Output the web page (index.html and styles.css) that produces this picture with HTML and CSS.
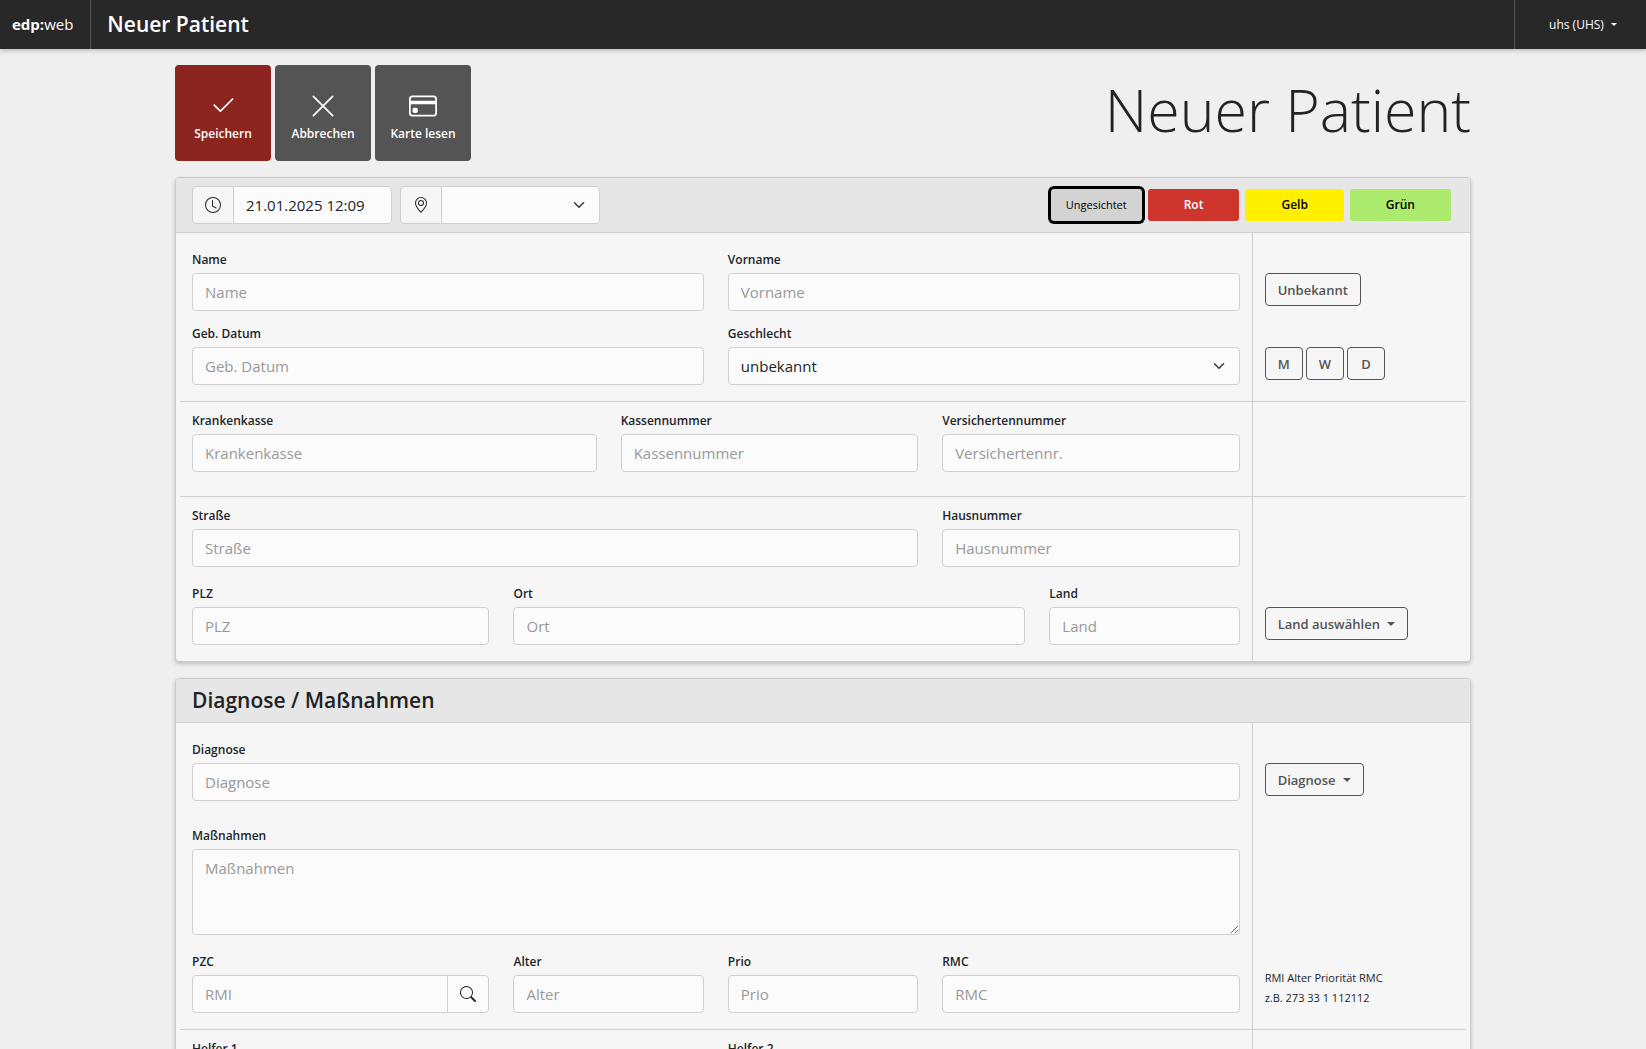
FILE: index.html
```html
<!DOCTYPE html>
<html lang="de">
<head>
<meta charset="UTF-8">
<meta name="viewport" content="width=device-width, initial-scale=1.0">
<title>Neuer Patient</title>
<link rel="stylesheet" href="styles.css">
</head>
<body>
  <nav class="navbar">
    <a class="brand" href="#"><b>edp:</b>web</a>
    <span class="navbar-title">Neuer Patient</span>
    <button type="button" class="user-menu">uhs (UHS) <span class="caret"></span></button>
  </nav>

  <form class="container">
    <div class="page-head">
      <div class="tiles">
        <button type="button" class="tile save">
          <svg width="28" height="28" viewBox="0 0 16 16" fill="currentColor"><path d="M13.854 3.646a.5.5 0 0 1 0 .708l-7 7a.5.5 0 0 1-.708 0l-3.5-3.5a.5.5 0 1 1 .708-.708L6.5 10.293l6.646-6.647a.5.5 0 0 1 .708 0"/></svg>
          Speichern
        </button>
        <button type="button" class="tile">
          <svg width="28" height="28" viewBox="0 0 16 16" fill="none" stroke="currentColor" stroke-linecap="round"><path d="M2.5 2.5l11 11M13.5 2.5l-11 11"/></svg>
          Abbrechen
        </button>
        <button type="button" class="tile">
          <svg width="28" height="28" viewBox="0 0 16 16" fill="currentColor"><path d="M0 4a2 2 0 0 1 2-2h12a2 2 0 0 1 2 2v8a2 2 0 0 1-2 2H2a2 2 0 0 1-2-2zm2-1a1 1 0 0 0-1 1v1h14V4a1 1 0 0 0-1-1zm13 4H1v5a1 1 0 0 0 1 1h12a1 1 0 0 0 1-1z"/><path d="M2 10a1 1 0 0 1 1-1h1a1 1 0 0 1 1 1v1a1 1 0 0 1-1 1H3a1 1 0 0 1-1-1z"/></svg>
          Karte lesen
        </button>
      </div>
      <h1>Neuer Patient</h1>
    </div>

    <section class="card">
      <div class="card-header">
        <div class="input-group">
          <label class="addon" for="zeit" aria-label="Zeit">
            <svg width="16" height="16" viewBox="0 0 16 16" fill="currentColor"><path d="M8 3.5a.5.5 0 0 0-1 0V9a.5.5 0 0 0 .252.434l3.5 2a.5.5 0 0 0 .496-.868L8 8.71z"/><path d="M8 16A8 8 0 1 0 8 0a8 8 0 0 0 0 16m7-8A7 7 0 1 1 1 8a7 7 0 0 1 14 0"/></svg>
          </label>
          <input class="control" type="text" id="zeit" value="21.01.2025 12:09">
        </div>
        <div class="input-group">
          <label class="addon" for="standort" aria-label="Standort">
            <svg width="16" height="16" viewBox="0 0 16 16" fill="currentColor"><path d="M12.166 8.94c-.524 1.062-1.234 2.12-1.96 3.07A32 32 0 0 1 8 14.58a32 32 0 0 1-2.206-2.57c-.726-.95-1.436-2.008-1.96-3.07C3.304 7.867 3 6.862 3 6a5 5 0 0 1 10 0c0 .862-.305 1.867-.834 2.94M8 16s6-5.686 6-10A6 6 0 0 0 2 6c0 4.314 6 10 6 10"/><path d="M8 8a2 2 0 1 1 0-4 2 2 0 0 1 0 4m0 1a3 3 0 1 0 0-6 3 3 0 0 0 0 6"/></svg>
          </label>
          <select class="control select" id="standort"><option></option></select>
        </div>
        <div class="triage">
          <button type="button" class="none active">Ungesichtet</button>
          <button type="button" class="red">Rot</button>
          <button type="button" class="yellow">Gelb</button>
          <button type="button" class="green">Grün</button>
        </div>
      </div>

      <div class="block first">
        <div class="form-row">
          <div class="fields">
            <div class="field w5"><label for="name">Name</label><input class="control" type="text" id="name" placeholder="Name"></div>
            <div class="field w5"><label for="vorname">Vorname</label><input class="control" type="text" id="vorname" placeholder="Vorname"></div>
          </div>
          <div class="side"><button type="button" class="btn">Unbekannt</button></div>
        </div>
        <div class="form-row">
          <div class="fields">
            <div class="field w5"><label for="geb">Geb. Datum</label><input class="control" type="text" id="geb" placeholder="Geb. Datum"></div>
            <div class="field w5"><label for="geschlecht">Geschlecht</label><select class="control select" id="geschlecht"><option>unbekannt</option></select></div>
          </div>
          <div class="side">
            <button type="button" class="btn">M</button>
            <button type="button" class="btn">W</button>
            <button type="button" class="btn">D</button>
          </div>
        </div>
      </div>

      <div class="block insurance">
        <div class="form-row">
          <div class="fields">
            <div class="field w4"><label for="kasse">Krankenkasse</label><input class="control" type="text" id="kasse" placeholder="Krankenkasse"></div>
            <div class="field w3"><label for="kassennr">Kassennummer</label><input class="control" type="text" id="kassennr" placeholder="Kassennummer"></div>
            <div class="field w3"><label for="versnr">Versichertennummer</label><input class="control" type="text" id="versnr" placeholder="Versichertennr."></div>
          </div>
          <div class="side"></div>
        </div>
      </div>

      <div class="block address">
        <div class="form-row">
          <div class="fields">
            <div class="field w7"><label for="strasse">Straße</label><input class="control" type="text" id="strasse" placeholder="Straße"></div>
            <div class="field w3"><label for="hausnr">Hausnummer</label><input class="control" type="text" id="hausnr" placeholder="Hausnummer"></div>
          </div>
          <div class="side"></div>
        </div>
        <div class="form-row">
          <div class="fields">
            <div class="field w3"><label for="plz">PLZ</label><input class="control" type="text" id="plz" placeholder="PLZ"></div>
            <div class="field w5"><label for="ort">Ort</label><input class="control" type="text" id="ort" placeholder="Ort"></div>
            <div class="field w2"><label for="land">Land</label><input class="control" type="text" id="land" placeholder="Land"></div>
          </div>
          <div class="side"><button type="button" class="btn">Land auswählen <span class="caret"></span></button></div>
        </div>
      </div>
    </section>

    <section class="card">
      <div class="card-header heading"><h2>Diagnose / Maßnahmen</h2></div>

      <div class="block first diagnosis">
        <div class="form-row">
          <div class="fields">
            <div class="field w10"><label for="diagnose">Diagnose</label><input class="control" type="text" id="diagnose" placeholder="Diagnose"></div>
          </div>
          <div class="side"><button type="button" class="btn">Diagnose <span class="caret"></span></button></div>
        </div>
        <div class="form-row">
          <div class="fields">
            <div class="field w10"><label for="massnahmen">Maßnahmen</label><textarea class="control" id="massnahmen" rows="3" placeholder="Maßnahmen"></textarea></div>
          </div>
          <div class="side"></div>
        </div>
        <div class="form-row">
          <div class="fields">
            <div class="field w3">
              <label for="pzc">PZC</label>
              <div class="input-group">
                <input class="control" type="text" id="pzc" placeholder="RMI">
                <button type="button" class="search" aria-label="Suchen">
                  <svg width="16" height="16" viewBox="0 0 16 16" fill="currentColor"><path d="M11.742 10.344a6.5 6.5 0 1 0-1.397 1.398h-.001q.044.06.098.115l3.85 3.85a1 1 0 0 0 1.415-1.414l-3.85-3.85a1 1 0 0 0-.115-.1zM12 6.5a5.5 5.5 0 1 1-11 0 5.5 5.5 0 0 1 11 0"/></svg>
                </button>
              </div>
            </div>
            <div class="field w2"><label for="alter">Alter</label><input class="control" type="text" id="alter" placeholder="Alter"></div>
            <div class="field w2"><label for="prio">Prio</label><input class="control" type="text" id="prio" placeholder="Prio"></div>
            <div class="field w3"><label for="rmc">RMC</label><input class="control" type="text" id="rmc" placeholder="RMC"></div>
          </div>
          <div class="side hint">RMI Alter Priorität RMC<br>z.B. 273 33 1 112112</div>
        </div>
      </div>

      <div class="block">
        <div class="form-row">
          <div class="fields">
            <div class="field w5"><label for="helfer1">Helfer 1</label><input class="control" type="text" id="helfer1" placeholder="Helfer 1"></div>
            <div class="field w5"><label for="helfer2">Helfer 2</label><input class="control" type="text" id="helfer2" placeholder="Helfer 2"></div>
          </div>
          <div class="side"></div>
        </div>
      </div>
    </section>
  </form>
</body>
</html>
```

FILE: styles.css
```css
* {
  box-sizing: border-box;
}

body {
  margin: 0;
  font-family: "Open Sans", "Noto Sans", sans-serif;
  font-size: 15px;
  line-height: 24px;
  color: #212529;
  background-color: #efefef;
}

button, input, select, textarea {
  font: inherit;
  color: inherit;
  margin: 0;
}

button {
  cursor: pointer;
}

h1, h2 {
  margin: 0;
  color: #222;
}

/* top bar */
.navbar {
  display: flex;
  height: 49px;
  background-color: #282828;
  color: #fff;
  box-shadow: 0 2px 4px rgba(0, 0, 0, 0.2);
}

.brand {
  display: flex;
  align-items: center;
  padding: 0 17px 1px 12px;
  border-right: 1px solid #545454;
  color: #fff;
  text-decoration: none;
}

.navbar-title {
  display: flex;
  align-items: center;
  padding: 0 0 1px 16px;
  font-size: 21px;
  font-weight: 600;
}

.user-menu {
  margin-left: auto;
  padding: 0 29px 0 34px;
  border: 0;
  border-left: 1px solid #545454;
  background: none;
  font-size: 12px;
}

.caret {
  display: inline-block;
  margin-left: 4px;
  vertical-align: 3px;
  border-top: 4px solid;
  border-left: 4px solid transparent;
  border-right: 4px solid transparent;
}

.user-menu .caret {
  border-width: 3px 3px 0;
}

.container {
  max-width: 1320px;
  margin: 0 auto;
  padding: 16px 12px;
}

.page-head {
  display: flex;
  justify-content: space-between;
  margin-bottom: 16px;
}

.page-head h1 {
  font-size: 59px;
  font-weight: 300;
  line-height: 88px;
}

.tiles {
  display: flex;
  gap: 4px;
}

.tile {
  display: flex;
  flex-direction: column;
  align-items: center;
  width: 96px;
  height: 96px;
  padding: 27px 0 0;
  border: 0;
  border-radius: 4px;
  background-color: #545454;
  color: #fff;
  font-size: 12px;
  font-weight: 600;
  line-height: 28px;
}

.tile.save {
  background-color: #8c251f;
}

/* cards */
.card {
  margin-bottom: 16px;
  border: 1px solid #ccc;
  border-radius: 4px;
  background-color: #f6f6f6;
  box-shadow: 0 2px 4px rgba(0, 0, 0, 0.2);
}

.card-header {
  display: flex;
  align-items: center;
  gap: 8px;
  padding: 8px 16px;
  border-bottom: 1px solid #d0d0d0;
  border-radius: 3px 3px 0 0;
  background-color: #e6e6e6;
}

.card-header .input-group {
  width: 200px;
}

.card-header.heading {
  padding: 6px 16px;
}

.card-header h2 {
  font-size: 21px;
  font-weight: 600;
  line-height: 31px;
}

.triage {
  display: flex;
  gap: 6px;
  margin-left: auto;
  padding-right: 3px;
}

.triage button {
  height: 32px;
  padding: 0 36px;
  border: 0;
  border-radius: 3px;
  color: #000;
  font-size: 12px;
  font-weight: 600;
}

.triage .none {
  padding: 0 15px;
  background-color: #d3d3d3;
  font-size: 11px;
  font-weight: 400;
}

.triage .active {
  box-shadow: 0 0 0 3px #000;
}

.triage .red {
  background-color: #ce352c;
  color: #fff;
}

.triage .yellow {
  background-color: #fff000;
}

.triage .green {
  background-color: #adeb6e;
}

/* form */
.block {
  margin: 0 4px;
}

.block + .block {
  border-top: 1px solid #d0d0d0;
}

.form-row {
  display: grid;
  grid-template-columns: minmax(0, 10fr) minmax(0, 2fr);
}

.fields {
  display: grid;
  grid-template-columns: repeat(10, minmax(0, 1fr));
  column-gap: 24px;
  padding: 8px 12px 0;
}

.side {
  padding: 32px 0 0 12px;
  border-left: 1px solid #d0d0d0;
  display: flex;
  align-items: flex-start;
  gap: 3px;
}

.first .fields {
  padding-top: 16px;
}

.first .side {
  padding-top: 40px;
}

.first .form-row + .form-row .fields {
  padding-top: 12px;
}

.first .form-row + .form-row .side {
  padding-top: 36px;
}

.address .form-row + .form-row .fields {
  padding-top: 16px;
}

.address .form-row + .form-row .side {
  padding-top: 40px;
}

.diagnosis .form-row:nth-child(2) .fields {
  padding-top: 24px;
}

.diagnosis .form-row:nth-child(3) .fields {
  padding-top: 16px;
}

.form-row:last-child .fields {
  padding-bottom: 16px;
}

.insurance .form-row .fields {
  padding-bottom: 24px;
}

.w2 { grid-column: span 2; }
.w3 { grid-column: span 3; }
.w4 { grid-column: span 4; }
.w5 { grid-column: span 5; }
.w7 { grid-column: span 7; }
.w10 { grid-column: span 10; }

.field > label {
  display: block;
  margin-bottom: 3px;
  font-size: 12px;
  font-weight: 600;
  line-height: 21px;
}

.control {
  display: block;
  width: 100%;
  height: 38px;
  padding: 6px 12px;
  border: 1px solid #d0d0d0;
  border-radius: 4px;
  background-color: #fbfbfb;
}

.control::placeholder {
  color: #999;
  opacity: 1;
}

textarea.control {
  height: 86px;
  resize: vertical;
}

.select {
  appearance: none;
  background-image: url("data:image/svg+xml,%3Csvg xmlns='http://www.w3.org/2000/svg' viewBox='0 0 16 16'%3E%3Cpath fill='none' stroke='%23343a40' stroke-linecap='round' stroke-linejoin='round' stroke-width='2' d='m2 5 6 6 6-6'/%3E%3C/svg%3E");
  background-repeat: no-repeat;
  background-position: right 14px center;
  background-size: 12px 12px;
}

.input-group {
  display: flex;
}

.addon, .search {
  flex: none;
  display: flex;
  align-items: center;
  justify-content: center;
  width: 42px;
  border: 1px solid #d0d0d0;
  background-color: #f6f6f6;
}

.addon {
  margin-right: -1px;
  border-radius: 4px 0 0 4px;
}

.addon + .control {
  border-radius: 0 4px 4px 0;
}

.input-group .control:first-child {
  border-radius: 4px 0 0 4px;
}

.search {
  margin-left: -1px;
  padding: 0;
  border-radius: 0 4px 4px 0;
  background-color: #fbfbfb;
}

.btn {
  min-width: 38px;
  height: 33px;
  padding: 0 12px;
  border: 1px solid #545454;
  border-radius: 4px;
  background: none;
  color: #545454;
  font-size: 13px;
  font-weight: 600;
}

.first .form-row .side.hint {
  padding-top: 33px;
  font-size: 11px;
  line-height: 20px;
}
```
